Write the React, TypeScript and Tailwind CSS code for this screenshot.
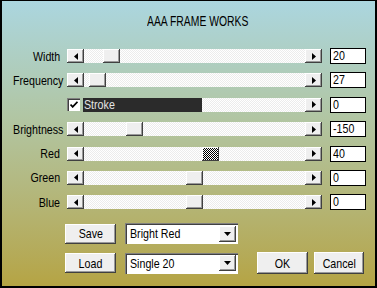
import React from 'react';

const font = { fontFamily: "'Liberation Sans', Arial, sans-serif" };

// classic raised / sunken bevels
const raised =
  'bg-[#efefef] shadow-[inset_-1px_-1px_#404040,inset_1px_1px_#ffffff,inset_-2px_-2px_#9a9a9a]';
const sunken =
  'bg-white shadow-[inset_1px_1px_#808080,inset_2px_2px_#404040,inset_-1px_-1px_#ffffff]';
const track =
  'bg-[repeating-conic-gradient(#ececec_0_25%,#ffffff_0_50%)] bg-[length:2px_2px]';

// the dialog font is a narrow sans, so squeeze Liberation Sans horizontally
const Narrow = ({ children, right }: { children: React.ReactNode; right?: boolean }) => (
  <span className={`inline-block whitespace-nowrap scale-x-[0.82] ${right ? 'origin-right' : 'origin-left'}`}>
    {children}
  </span>
);

const Arrow = ({ dir }: { dir: 'left' | 'right' | 'down' }) => {
  if (dir === 'down')
    return (
      <svg width="7" height="4" viewBox="0 0 7 4">
        <path d="M0 0h7L3.5 4z" fill="#000" />
      </svg>
    );
  return (
    <svg width="4" height="7" viewBox="0 0 4 7">
      <path d={dir === 'left' ? 'M4 0v7L0 3.5z' : 'M0 0v7l4-3.5z'} fill="#000" />
    </svg>
  );
};

const ArrowBtn = ({ dir }: { dir: 'left' | 'right' }) => (
  <div className={`w-[17px] h-full flex items-center justify-center shrink-0 ${raised}`}>
    <Arrow dir={dir} />
  </div>
);

type RowProps = {
  label?: string;
  value: string;
  thumb?: number;
  hatched?: boolean;
  stroke?: boolean;
};

const SliderRow = ({ label, value, thumb = 0, hatched, stroke }: RowProps) => (
  <div className="flex items-center h-4">
    <div className="w-[58px] text-right text-[13px] leading-none text-black">
      {label && <Narrow right>{label}</Narrow>}
    </div>
    <div className="ml-[7px] w-[255px] h-[14px] flex">
      {stroke ? (
        <>
          <div className={`w-[13px] h-[13px] flex items-center justify-center ${sunken}`}>
            <svg width="8" height="7" viewBox="0 0 8 7">
              <path d="M0.5 3.5l2.2 2.3L7.5 0.8" stroke="#000" strokeWidth="1.8" fill="none" />
            </svg>
          </div>
          <div className="ml-[3px] w-[119px] h-full bg-[#2b2b2b] text-[#e4e4e4] text-[13px] leading-[14px] pl-[1px]">
            <Narrow>Stroke</Narrow>
          </div>
          <div className={`flex-1 h-full ${track}`} />
        </>
      ) : (
        <>
          <ArrowBtn dir="left" />
          <div className={`relative flex-1 h-full ${track}`}>
            <div
              className={`absolute top-0 h-full w-[17px] ${
                hatched
                  ? 'bg-[repeating-conic-gradient(#000_0_25%,#fff_0_50%)] bg-[length:2px_2px] shadow-[inset_-1px_-1px_#404040,inset_1px_1px_#ffffff]'
                  : raised
              }`}
              style={{ left: thumb }}
            />
          </div>
        </>
      )}
      <ArrowBtn dir="right" />
    </div>
    <div className="ml-2 w-9 h-4 bg-white border border-black text-[13px] leading-[14px] pl-[2px] text-black">
      <Narrow>{value}</Narrow>
    </div>
  </div>
);

const Combo = ({ text }: { text: string }) => (
  <div className={`w-[113px] h-[21px] flex items-center pl-[5px] pr-[2px] ${sunken}`}>
    <span className="flex-1 text-[13px] leading-none text-black">
      <Narrow>{text}</Narrow>
    </span>
    <div className={`w-[17px] h-[16px] flex items-center justify-center ${raised}`}>
      <Arrow dir="down" />
    </div>
  </div>
);

const Btn = ({ text, w, h }: { text: string; w: string; h: string }) => (
  <div className={`${w} ${h} flex items-center justify-center text-[13px] text-black ${raised}`}>
    <span className="inline-block scale-x-[0.82]">{text}</span>
  </div>
);

export default function App() {
  return (
    <div
      style={font}
      className="w-[377px] h-[288px] overflow-hidden border-t border-l-2 border-r-2 border-b-2 border-black bg-gradient-to-b from-[#abd6df] via-[#b1c6a4] via-40% to-[#b5a443] relative"
    >
      <div className="pt-[13px] pl-[145px] text-[14px] leading-none text-black">
        <span className="inline-block whitespace-nowrap scale-x-[0.74] origin-left">AAA FRAME WORKS</span>
      </div>
      <div className="mt-[20px] flex flex-col gap-[8.4px]">
        <SliderRow label="Width" value="20" thumb={19} />
        <SliderRow label="Frequency" value="27" thumb={5} />
        <SliderRow value="0" stroke />
        <SliderRow label="Brightness" value="-150" thumb={42} />
        <SliderRow label="Red" value="40" thumb={118} hatched />
        <SliderRow label="Green" value="0" thumb={102} />
        <SliderRow label="Blue" value="0" thumb={102} />
      </div>
      <div className="mt-[13px] ml-[63px] flex flex-col gap-[8px]">
        <div className="flex items-center gap-[9px] h-[21px]">
          <Btn text="Save" w="w-[51px]" h="h-[20px]" />
          <Combo text="Bright Red" />
        </div>
        <div className="flex items-center h-[22px]">
          <Btn text="Load" w="w-[51px]" h="h-[20px]" />
          <div className="ml-[9px]">
            <Combo text="Single 20" />
          </div>
          <div className="ml-[19px]">
            <Btn text="OK" w="w-[51px]" h="h-[22px]" />
          </div>
          <div className="ml-[6px]">
            <Btn text="Cancel" w="w-[50px]" h="h-[22px]" />
          </div>
        </div>
      </div>
    </div>
  );
}
